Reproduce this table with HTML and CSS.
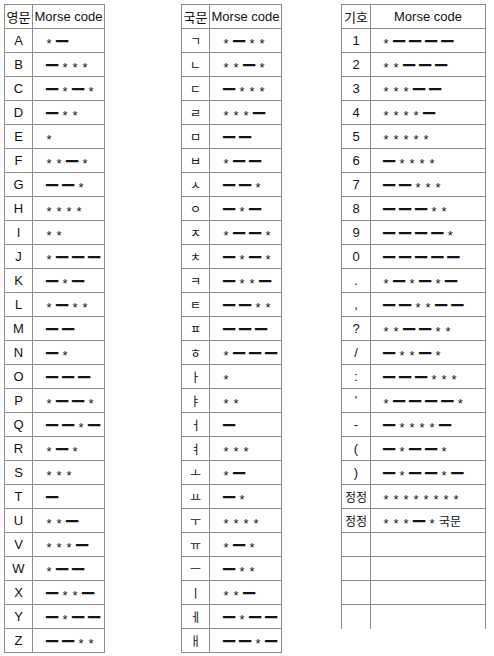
FILE: index.html
```html
<!DOCTYPE html>
<html lang="ko">
<head>
<meta charset="utf-8">
<title>Morse code</title>
<link rel="stylesheet" href="styles.css">
</head>
<body>
<div class="page">
  <div class="grid g1">
    <div class="c hd ko">영문</div><div class="c hd">Morse code</div>
    <div class="c k">A</div><div class="c m"><span class="t">*</span><span class="h">━</span></div>
    <div class="c k">B</div><div class="c m"><span class="h">━</span><span class="t">*</span><span class="t">*</span><span class="t">*</span></div>
    <div class="c k">C</div><div class="c m"><span class="h">━</span><span class="t">*</span><span class="h">━</span><span class="t">*</span></div>
    <div class="c k">D</div><div class="c m"><span class="h">━</span><span class="t">*</span><span class="t">*</span></div>
    <div class="c k">E</div><div class="c m"><span class="t">*</span></div>
    <div class="c k">F</div><div class="c m"><span class="t">*</span><span class="t">*</span><span class="h">━</span><span class="t">*</span></div>
    <div class="c k">G</div><div class="c m"><span class="h">━</span><span class="h">━</span><span class="t">*</span></div>
    <div class="c k">H</div><div class="c m"><span class="t">*</span><span class="t">*</span><span class="t">*</span><span class="t">*</span></div>
    <div class="c k">I</div><div class="c m"><span class="t">*</span><span class="t">*</span></div>
    <div class="c k">J</div><div class="c m"><span class="t">*</span><span class="h">━</span><span class="h">━</span><span class="h">━</span></div>
    <div class="c k">K</div><div class="c m"><span class="h">━</span><span class="t">*</span><span class="h">━</span></div>
    <div class="c k">L</div><div class="c m"><span class="t">*</span><span class="h">━</span><span class="t">*</span><span class="t">*</span></div>
    <div class="c k">M</div><div class="c m"><span class="h">━</span><span class="h">━</span></div>
    <div class="c k">N</div><div class="c m"><span class="h">━</span><span class="t">*</span></div>
    <div class="c k">O</div><div class="c m"><span class="h">━</span><span class="h">━</span><span class="h">━</span></div>
    <div class="c k">P</div><div class="c m"><span class="t">*</span><span class="h">━</span><span class="h">━</span><span class="t">*</span></div>
    <div class="c k">Q</div><div class="c m"><span class="h">━</span><span class="h">━</span><span class="t">*</span><span class="h">━</span></div>
    <div class="c k">R</div><div class="c m"><span class="t">*</span><span class="h">━</span><span class="t">*</span></div>
    <div class="c k">S</div><div class="c m"><span class="t">*</span><span class="t">*</span><span class="t">*</span></div>
    <div class="c k">T</div><div class="c m"><span class="h">━</span></div>
    <div class="c k">U</div><div class="c m"><span class="t">*</span><span class="t">*</span><span class="h">━</span></div>
    <div class="c k">V</div><div class="c m"><span class="t">*</span><span class="t">*</span><span class="t">*</span><span class="h">━</span></div>
    <div class="c k">W</div><div class="c m"><span class="t">*</span><span class="h">━</span><span class="h">━</span></div>
    <div class="c k">X</div><div class="c m"><span class="h">━</span><span class="t">*</span><span class="t">*</span><span class="h">━</span></div>
    <div class="c k">Y</div><div class="c m"><span class="h">━</span><span class="t">*</span><span class="h">━</span><span class="h">━</span></div>
    <div class="c k">Z</div><div class="c m"><span class="h">━</span><span class="h">━</span><span class="t">*</span><span class="t">*</span></div>
  </div>

  <div class="grid g2">
    <div class="c hd ko">국문</div><div class="c hd">Morse code</div>
    <div class="c k j">ㄱ</div><div class="c m"><span class="t">*</span><span class="h">━</span><span class="t">*</span><span class="t">*</span></div>
    <div class="c k j">ㄴ</div><div class="c m"><span class="t">*</span><span class="t">*</span><span class="h">━</span><span class="t">*</span></div>
    <div class="c k j">ㄷ</div><div class="c m"><span class="h">━</span><span class="t">*</span><span class="t">*</span><span class="t">*</span></div>
    <div class="c k j">ㄹ</div><div class="c m"><span class="t">*</span><span class="t">*</span><span class="t">*</span><span class="h">━</span></div>
    <div class="c k j">ㅁ</div><div class="c m"><span class="h">━</span><span class="h">━</span></div>
    <div class="c k j">ㅂ</div><div class="c m"><span class="t">*</span><span class="h">━</span><span class="h">━</span></div>
    <div class="c k j">ㅅ</div><div class="c m"><span class="h">━</span><span class="h">━</span><span class="t">*</span></div>
    <div class="c k j">ㅇ</div><div class="c m"><span class="h">━</span><span class="t">*</span><span class="h">━</span></div>
    <div class="c k j">ㅈ</div><div class="c m"><span class="t">*</span><span class="h">━</span><span class="h">━</span><span class="t">*</span></div>
    <div class="c k j">ㅊ</div><div class="c m"><span class="h">━</span><span class="t">*</span><span class="h">━</span><span class="t">*</span></div>
    <div class="c k j">ㅋ</div><div class="c m"><span class="h">━</span><span class="t">*</span><span class="t">*</span><span class="h">━</span></div>
    <div class="c k j">ㅌ</div><div class="c m"><span class="h">━</span><span class="h">━</span><span class="t">*</span><span class="t">*</span></div>
    <div class="c k j">ㅍ</div><div class="c m"><span class="h">━</span><span class="h">━</span><span class="h">━</span></div>
    <div class="c k j">ㅎ</div><div class="c m"><span class="t">*</span><span class="h">━</span><span class="h">━</span><span class="h">━</span></div>
    <div class="c k j">ㅏ</div><div class="c m"><span class="t">*</span></div>
    <div class="c k j">ㅑ</div><div class="c m"><span class="t">*</span><span class="t">*</span></div>
    <div class="c k j">ㅓ</div><div class="c m"><span class="h">━</span></div>
    <div class="c k j">ㅕ</div><div class="c m"><span class="t">*</span><span class="t">*</span><span class="t">*</span></div>
    <div class="c k j">ㅗ</div><div class="c m"><span class="t">*</span><span class="h">━</span></div>
    <div class="c k j">ㅛ</div><div class="c m"><span class="h">━</span><span class="t">*</span></div>
    <div class="c k j">ㅜ</div><div class="c m"><span class="t">*</span><span class="t">*</span><span class="t">*</span><span class="t">*</span></div>
    <div class="c k j">ㅠ</div><div class="c m"><span class="t">*</span><span class="h">━</span><span class="t">*</span></div>
    <div class="c k j">ㅡ</div><div class="c m"><span class="h">━</span><span class="t">*</span><span class="t">*</span></div>
    <div class="c k j">ㅣ</div><div class="c m"><span class="t">*</span><span class="t">*</span><span class="h">━</span></div>
    <div class="c k j">ㅔ</div><div class="c m"><span class="h">━</span><span class="t">*</span><span class="h">━</span><span class="h">━</span></div>
    <div class="c k j">ㅐ</div><div class="c m"><span class="h">━</span><span class="h">━</span><span class="t">*</span><span class="h">━</span></div>
  </div>

  <div class="grid g3">
    <div class="c hd ko">기호</div><div class="c hd">Morse code</div>
    <div class="c k">1</div><div class="c m"><span class="t">*</span><span class="h">━</span><span class="h">━</span><span class="h">━</span><span class="h">━</span></div>
    <div class="c k">2</div><div class="c m"><span class="t">*</span><span class="t">*</span><span class="h">━</span><span class="h">━</span><span class="h">━</span></div>
    <div class="c k">3</div><div class="c m"><span class="t">*</span><span class="t">*</span><span class="t">*</span><span class="h">━</span><span class="h">━</span></div>
    <div class="c k">4</div><div class="c m"><span class="t">*</span><span class="t">*</span><span class="t">*</span><span class="t">*</span><span class="h">━</span></div>
    <div class="c k">5</div><div class="c m"><span class="t">*</span><span class="t">*</span><span class="t">*</span><span class="t">*</span><span class="t">*</span></div>
    <div class="c k">6</div><div class="c m"><span class="h">━</span><span class="t">*</span><span class="t">*</span><span class="t">*</span><span class="t">*</span></div>
    <div class="c k">7</div><div class="c m"><span class="h">━</span><span class="h">━</span><span class="t">*</span><span class="t">*</span><span class="t">*</span></div>
    <div class="c k">8</div><div class="c m"><span class="h">━</span><span class="h">━</span><span class="h">━</span><span class="t">*</span><span class="t">*</span></div>
    <div class="c k">9</div><div class="c m"><span class="h">━</span><span class="h">━</span><span class="h">━</span><span class="h">━</span><span class="t">*</span></div>
    <div class="c k">0</div><div class="c m"><span class="h">━</span><span class="h">━</span><span class="h">━</span><span class="h">━</span><span class="h">━</span></div>
    <div class="c k">.</div><div class="c m"><span class="t">*</span><span class="h">━</span><span class="t">*</span><span class="h">━</span><span class="t">*</span><span class="h">━</span></div>
    <div class="c k">,</div><div class="c m"><span class="h">━</span><span class="h">━</span><span class="t">*</span><span class="t">*</span><span class="h">━</span><span class="h">━</span></div>
    <div class="c k">?</div><div class="c m"><span class="t">*</span><span class="t">*</span><span class="h">━</span><span class="h">━</span><span class="t">*</span><span class="t">*</span></div>
    <div class="c k">/</div><div class="c m"><span class="h">━</span><span class="t">*</span><span class="t">*</span><span class="h">━</span><span class="t">*</span></div>
    <div class="c k">:</div><div class="c m"><span class="h">━</span><span class="h">━</span><span class="h">━</span><span class="t">*</span><span class="t">*</span><span class="t">*</span></div>
    <div class="c k">'</div><div class="c m"><span class="t">*</span><span class="h">━</span><span class="h">━</span><span class="h">━</span><span class="h">━</span><span class="t">*</span></div>
    <div class="c k">-</div><div class="c m"><span class="h">━</span><span class="t">*</span><span class="t">*</span><span class="t">*</span><span class="t">*</span><span class="h">━</span></div>
    <div class="c k">(</div><div class="c m"><span class="h">━</span><span class="t">*</span><span class="h">━</span><span class="h">━</span><span class="t">*</span></div>
    <div class="c k">)</div><div class="c m"><span class="h">━</span><span class="t">*</span><span class="h">━</span><span class="h">━</span><span class="t">*</span><span class="h">━</span></div>
    <div class="c k ko kb">정정</div><div class="c m"><span class="t">*</span><span class="t">*</span><span class="t">*</span><span class="t">*</span><span class="t">*</span><span class="t">*</span><span class="t">*</span><span class="t">*</span></div>
    <div class="c k ko kb">정정</div><div class="c m"><span class="t">*</span><span class="t">*</span><span class="t">*</span><span class="h">━</span><span class="t">*</span><span class="kw">국문</span></div>
    <div class="c"></div><div class="c"></div>
    <div class="c"></div><div class="c"></div>
    <div class="c"></div><div class="c"></div>
    <div class="c last"></div><div class="c last"></div>
  </div>
</div>
</body>
</html>
```
FILE: styles.css
```css
body {
  margin: 0;
  background: #fff;
  color: #111;
  font: 13px "Liberation Sans", "Noto Sans CJK KR", sans-serif;
}

.page {
  display: flex;
  align-items: flex-start;
  padding: 4px 0 0 4px;
}

.grid {
  display: grid;
  grid-auto-rows: 24px;
  border-left: 1px solid #8c8c8c;
  border-top: 1px solid #8c8c8c;
}

.g1,
.g2 {
  grid-template-columns: 28px 72px;
}

.g2 {
  margin-left: 76px;
}

.g3 {
  grid-template-columns: 29px 115px;
  margin-left: 59px;
}

.c {
  box-sizing: border-box;
  border-right: 1px solid #8c8c8c;
  border-bottom: 1px solid #8c8c8c;
  display: flex;
  align-items: center;
  white-space: nowrap;
}

.c.last {
  border-bottom: none;
}

.hd,
.k {
  justify-content: center;
}

.ko {
  font-family: "Noto Sans CJK KR", sans-serif;
  font-size: 13px;
}

.kb {
  font-size: 12px;
}

.j {
  font-family: "Noto Sans CJK KR", sans-serif;
  font-size: 12px;
}

.m {
  padding-left: 13px;
  gap: 4px;
}

.g3 .m {
  padding-left: 12px;
}

.t {
  width: 6px;
  text-align: center;
  line-height: 13px;
  padding-top: 6px;
}

.h {
  font: 20px/20px "DejaVu Sans", sans-serif;
  color: #1a0f1a;
  transform: scaleY(0.7);
}

.kw {
  font: 12px "Noto Sans CJK KR", sans-serif;
}
```
